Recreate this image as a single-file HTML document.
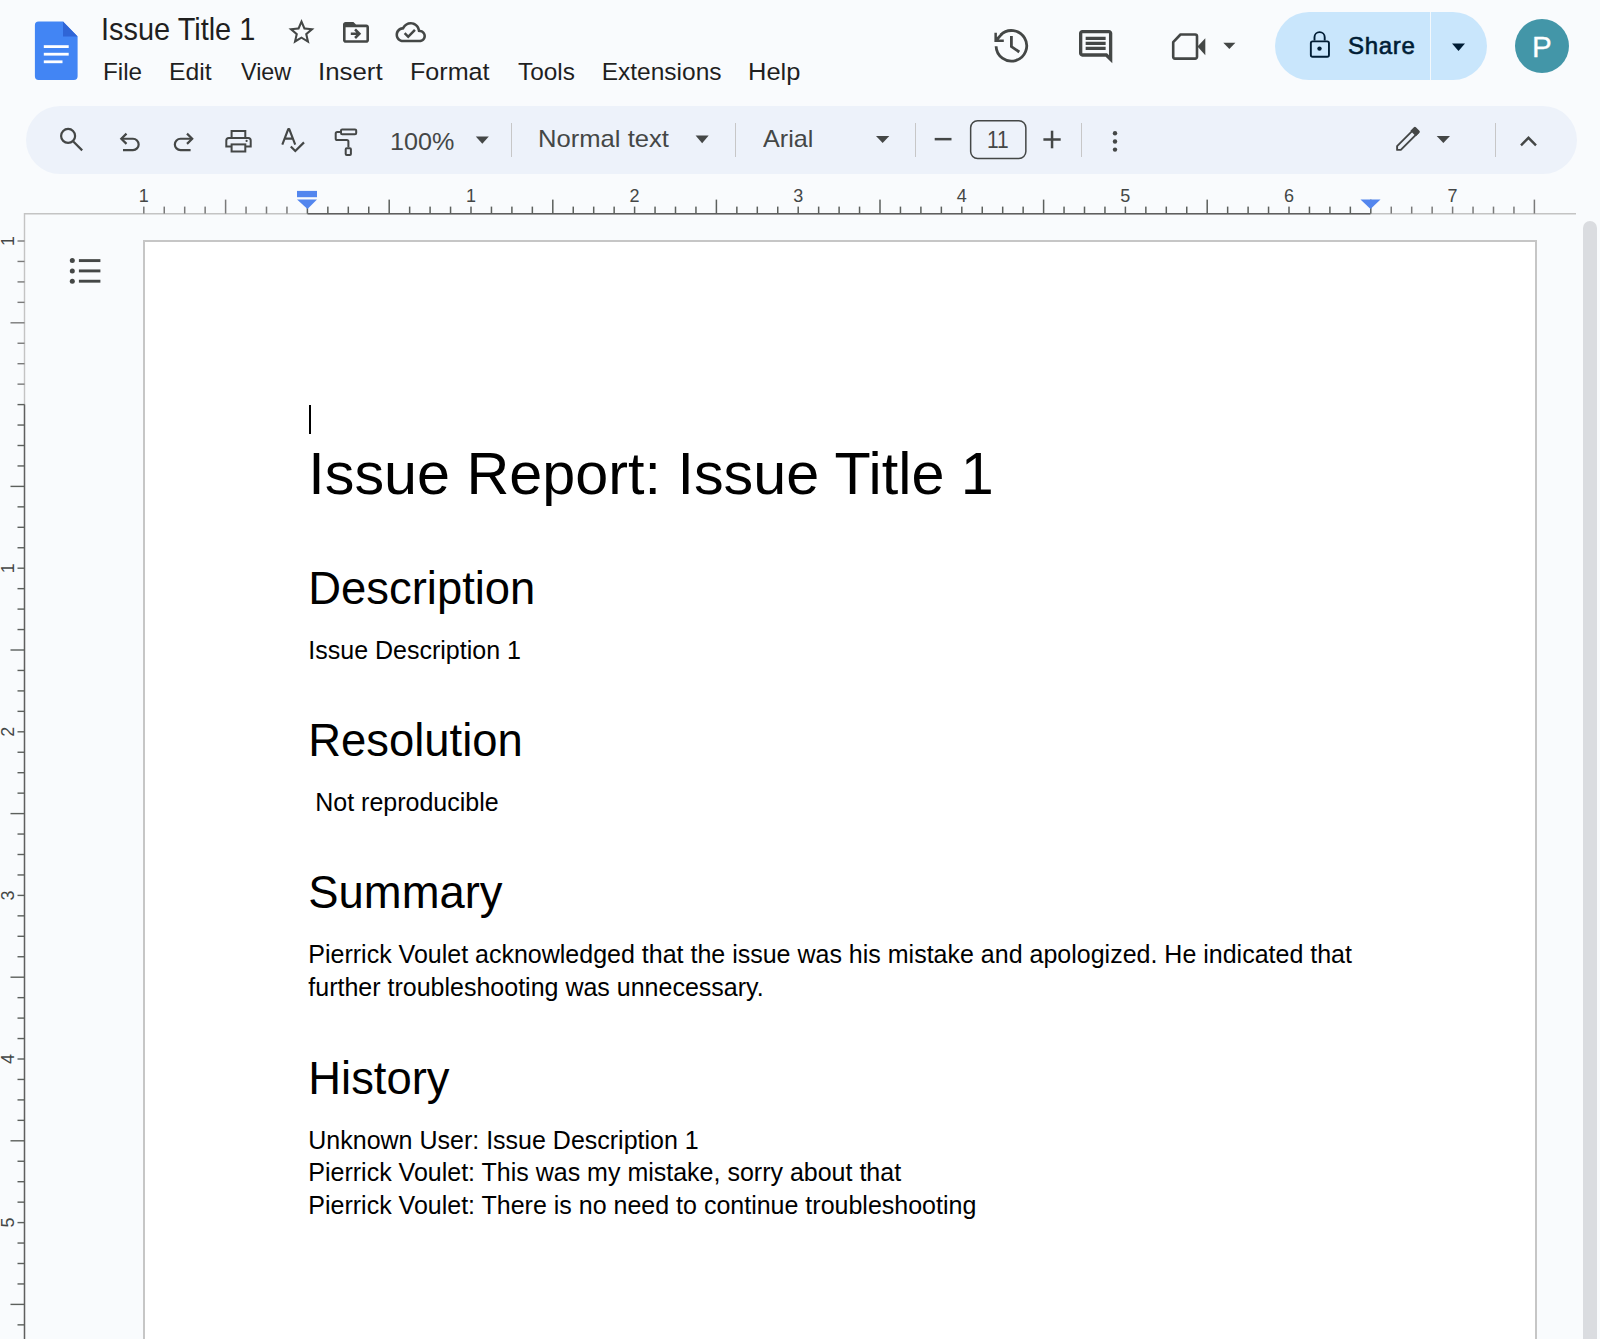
<!DOCTYPE html>
<html><head><meta charset="utf-8">
<style>
*{margin:0;padding:0;box-sizing:border-box}
html,body{width:1600px;height:1339px;overflow:hidden;background:#f9fbfd;font-family:"Liberation Sans",sans-serif;color:#1f1f1f}
.a{position:absolute}
.t{position:absolute;white-space:pre;line-height:1}
svg.l{position:absolute;left:0;top:0;overflow:visible}
.menu{font-size:24.5px;color:#1f1f1f}
.tt{font-size:23.8px;color:#444746}
.sep{position:absolute;width:1.4px;background:#c7c7c7;top:123px;height:34px}
.doc{color:#000}
</style></head>
<body>
<!-- toolbar bg -->
<div class="a" style="left:25.6px;top:105.6px;width:1551px;height:68px;border-radius:34px;background:#edf2fa"></div>
<!-- share button -->
<div class="a" style="left:1275px;top:12px;width:212.4px;height:67.6px;border-radius:34px;background:#c9e6fc"></div>
<div class="a" style="left:1429.5px;top:12px;width:1.2px;height:67.6px;background:#f3f8fc"></div>
<!-- avatar -->
<div class="a" style="left:1515px;top:18.7px;width:54.2px;height:54.2px;border-radius:50%;background:#4396a8"></div>
<div class="t" style="left:1532px;top:32px;font-size:29.6px;color:#fff;-webkit-text-stroke:0.3px #fff">P</div>

<!-- page -->
<div class="a" style="left:143px;top:240.1px;width:1394px;height:1200px;background:#fff;border:2px solid #c6c6c6"></div>
<!-- scrollbar -->
<div class="a" style="left:1583px;top:221px;width:14px;height:1200px;border-radius:7px;background:#dadce0"></div>

<svg class="l" width="1600" height="1339" viewBox="0 0 1600 1339">
  <!-- docs logo -->
  <path d="M38.6 21.6H63L77.6 36.6V76.2a3.7 3.7 0 0 1-3.7 3.7H38.6a3.7 3.7 0 0 1-3.7-3.7V25.3a3.7 3.7 0 0 1 3.7-3.7z" fill="#4285f4"/>
  <path d="M63 21.6L77.6 36.6H63z" fill="#2f65d6"/>
  <rect x="43.8" y="45.2" width="24.9" height="2.8" fill="#fff"/>
  <rect x="43.8" y="52.8" width="24.9" height="2.8" fill="#fff"/>
  <rect x="43.8" y="60.4" width="18.7" height="2.8" fill="#fff"/>
  <!-- star -->
  <path transform="translate(285.9 16.4) scale(1.3)" fill="#444746" d="M22 9.24l-7.19-.62L12 2 9.19 8.63 2 9.24l5.46 4.73L5.82 21 12 17.27 18.18 21l-1.63-7.03L22 9.24zM12 15.4l-3.76 2.27 1-4.28-3.32-2.88 4.38-.38L12 6.1l1.71 4.04 4.38.38-3.32 2.88 1 4.28L12 15.4z"/>
  <!-- folder move -->
  <path transform="translate(340.4 16.8) scale(1.3)" fill="#444746" d="M20,6h-8l-2-2H4C2.9,4,2,4.9,2,6v12c0,1.1,0.9,2,2,2h16c1.1,0,2-0.9,2-2V8C22,6.9,21.1,6,20,6z M20,18H4V8h16V18z M12.16,12H8v2h4.16l-1.59,1.59L11.99,17L16,13.01L11.99,9l-1.41,1.41L12.16,12z"/>
  <!-- cloud done -->
  <path transform="translate(395.5 16.9) scale(1.27)" fill="#444746" d="M19.35 10.04C18.67 6.59 15.64 4 12 4 9.11 4 6.6 5.64 5.35 8.04 2.34 8.36 0 10.910 0 14c0 3.31 2.69 6 6 6h13c2.76 0 5-2.24 5-5 0-2.64-2.05-4.78-4.65-4.960zM19 18H6c-2.21 0-4-1.79-4-4 0-2.05 1.53-3.76 3.56-3.97l1.07-.11.5-.95C8.08 7.14 9.940 6 12 6c2.62 0 4.88 1.86 5.39 4.43l.3 1.5 1.53.11c1.56.1 2.78 1.41 2.78 2.96 0 1.65-1.35 3-3 3zm-9-3.82l-2.09-2.09L6.5 13.5 10 17l6.01-6.01-1.41-1.41z"/>
  <!-- history -->
  <g fill="none" stroke="#444746" stroke-width="2.8">
    <path d="M996.1 46.3A15.3 15.3 0 1 0 1000.6 35"/>
    <path d="M1011.4 36.1V46.6L1019.3 52"/>
  </g>
  <path d="M994.4 32.7H996.9V37.2L1000.6 33.6L1002.5 35.3L998.8 39.4H1003.8V41.9H994.4z" fill="#444746"/>
  <!-- comment -->
  <path transform="translate(1075.67 26.67) scale(1.665)" fill="#444746" d="M21.99 4c0-1.1-.89-2-1.99-2H4c-1.1 0-2 .9-2 2v12c0 1.1.9 2 2 2h14l4 4-.01-18zM20 4v13.17L18.83 16H4V4h16zM6 12h12v2H6zm0-3h12v2H6zm0-3h12v2H6z"/>
  <!-- video -->
  <path d="M1180.5 34.5H1195.2a1.8 1.8 0 0 1 1.8 1.8V56.8a1.8 1.8 0 0 1-1.8 1.8H1175a1.8 1.8 0 0 1-1.8-1.8V42.2z" fill="none" stroke="#444746" stroke-width="2.6" stroke-linejoin="round"/>
  <path d="M1197.5 46.5L1205.3 38.3V55.2z" fill="#444746"/>
  <path d="M1223.3 42.8H1235.4L1229.35 49z" fill="#444746"/>
  <!-- lock -->
  <path d="M1314.5 40.5V37.2a5.1 5.1 0 0 1 10.2 0V40.5" fill="none" stroke="#001d35" stroke-width="1.9"/>
  <rect x="1310.85" y="41.35" width="18.1" height="15.4" rx="1.8" fill="none" stroke="#001d35" stroke-width="1.9"/>
  <circle cx="1319.5" cy="48.6" r="2.2" fill="#001d35"/>
  <!-- share dropdown -->
  <path d="M1452 43.6H1465L1458.5 51z" fill="#001d35"/>

  <!-- toolbar icons -->
  <g fill="none" stroke="#444746" stroke-width="2.2">
    <circle cx="68.1" cy="135.9" r="7"/>
    <path d="M73.3 141.5L82.2 150.4"/>
    <!-- undo -->
    <path d="M121.5 138.75H133a5.6 5.6 0 0 1 0 11.3H123"/>
    <path d="M126.5 133.6L121.3 138.75L126.5 143.9"/>
    <!-- redo -->
    <path d="M192 138.75H180.5a5.6 5.6 0 0 0 0 11.3H190.6"/>
    <path d="M187 133.6L192.2 138.75L187 143.9"/>
    <!-- spellcheck -->
    <path d="M282.3 144.6L288.3 129H289.2L295.2 144.6M285.2 138.6H292.3" stroke-width="2.1" stroke-linejoin="bevel"/>
    <path d="M290.8 146.5L295.3 151L304 142.4"/>
    <!-- paint -->
    <rect x="341" y="129.4" width="15.2" height="4.9" rx="1.2" stroke-width="2"/>
    <path d="M341 131.9H337.3a1.6 1.6 0 0 0-1.6 1.6V138.4a1.6 1.6 0 0 0 1.6 1.6H346.8a1.6 1.6 0 0 1 1.6 1.6V147.2" stroke-width="2"/>
    <rect x="345.7" y="148.2" width="5.2" height="6.7" rx="1" stroke-width="2"/>
    <!-- print -->
    <path d="M231.6 137V131H245.3V137" stroke-width="2"/>
    <path d="M231 146.5H226.3V140.4a2.5 2.5 0 0 1 2.5-2.5H248.2a2.5 2.5 0 0 1 2.5 2.5V146.5H246" stroke-width="2"/>
    <rect x="231.6" y="144.4" width="13.7" height="7.1" stroke-width="2"/>
  </g>
  <circle cx="246.6" cy="140.9" r="1.1" fill="#444746"/>
  <!-- dropdown arrows -->
  <g fill="#444746">
    <path d="M475.8 136.5H488.8L482.3 143.7z"/>
    <path d="M695.6 135.6H708.7L702.15 143.2z"/>
    <path d="M876 135.9H889.3L882.65 143.1z"/>
    <path d="M1436.7 135.9H1450L1443.35 142.9z"/>
    <!-- minus plus -->
    <rect x="934.7" y="137.9" width="16.8" height="2.5"/>
    <rect x="1043.4" y="138.25" width="17.3" height="2.5"/>
    <rect x="1050.8" y="130.7" width="2.5" height="17.6"/>
    <!-- kebab -->
    <circle cx="1115" cy="133.3" r="2.2"/>
    <circle cx="1115" cy="141.5" r="2.2"/>
    <circle cx="1115" cy="149.6" r="2.2"/>
  </g>
  <rect x="970.65" y="120.75" width="55.2" height="37.8" rx="7" fill="none" stroke="#444746" stroke-width="1.5"/>
  <!-- pencil -->
  <path d="M1397.1 146.2L1414.6 128.7L1418.3 132.4L1400.8 149.9H1397.1z" fill="none" stroke="#444746" stroke-width="1.9" stroke-linejoin="round"/>
  <path d="M1413.9 127.3a1.4 1.4 0 0 1 2 0L1419.4 130.8a1.4 1.4 0 0 1 0 2L1415.9 136.3L1410.4 130.8z" fill="#444746"/>
  <!-- chevron up -->
  <path d="M1521 145.3L1528.5 137.8L1536 145.3" fill="none" stroke="#444746" stroke-width="2.4"/>

  <!-- outline icon -->
  <g fill="#444746">
    <circle cx="72.3" cy="260.6" r="2.5"/>
    <circle cx="72.3" cy="270.9" r="2.5"/>
    <circle cx="72.3" cy="281.2" r="2.5"/>
    <rect x="78.9" y="259.15" width="21.5" height="2.9"/>
    <rect x="78.9" y="269.45" width="21.5" height="2.9"/>
    <rect x="78.9" y="279.75" width="21.5" height="2.9"/>
  </g>

  <!-- rulers lines -->
  <rect x="24" y="213" width="1552" height="1.5" fill="#c4c4c4"/>
  <rect x="307.5" y="213" width="1063" height="1.5" fill="#5f5f5f"/>
  <rect x="23.8" y="213" width="1.4" height="1126" fill="#c4c4c4"/>
  <rect x="23.8" y="404.5" width="1.4" height="935" fill="#5f5f5f"/>
  <g fill="#606462">
  <rect x="143.05" y="206.60" width="1.5" height="7" fill="#7a7a7a"/>
<rect x="163.50" y="206.60" width="1.5" height="7" fill="#7a7a7a"/>
<rect x="183.95" y="206.60" width="1.5" height="7" fill="#7a7a7a"/>
<rect x="204.40" y="206.60" width="1.5" height="7" fill="#7a7a7a"/>
<rect x="224.85" y="199.60" width="1.5" height="14" fill="#7a7a7a"/>
<rect x="245.30" y="206.60" width="1.5" height="7" fill="#7a7a7a"/>
<rect x="265.75" y="206.60" width="1.5" height="7" fill="#7a7a7a"/>
<rect x="286.20" y="206.60" width="1.5" height="7" fill="#7a7a7a"/>
<rect x="306.65" y="206.60" width="1.5" height="7" fill="#5c605d"/>
<rect x="327.10" y="206.60" width="1.5" height="7" fill="#5c605d"/>
<rect x="347.55" y="206.60" width="1.5" height="7" fill="#5c605d"/>
<rect x="368.00" y="206.60" width="1.5" height="7" fill="#5c605d"/>
<rect x="388.45" y="199.60" width="1.5" height="14" fill="#5c605d"/>
<rect x="408.90" y="206.60" width="1.5" height="7" fill="#5c605d"/>
<rect x="429.35" y="206.60" width="1.5" height="7" fill="#5c605d"/>
<rect x="449.80" y="206.60" width="1.5" height="7" fill="#5c605d"/>
<rect x="470.25" y="206.60" width="1.5" height="7" fill="#5c605d"/>
<rect x="490.70" y="206.60" width="1.5" height="7" fill="#5c605d"/>
<rect x="511.15" y="206.60" width="1.5" height="7" fill="#5c605d"/>
<rect x="531.60" y="206.60" width="1.5" height="7" fill="#5c605d"/>
<rect x="552.05" y="199.60" width="1.5" height="14" fill="#5c605d"/>
<rect x="572.50" y="206.60" width="1.5" height="7" fill="#5c605d"/>
<rect x="592.95" y="206.60" width="1.5" height="7" fill="#5c605d"/>
<rect x="613.40" y="206.60" width="1.5" height="7" fill="#5c605d"/>
<rect x="633.85" y="206.60" width="1.5" height="7" fill="#5c605d"/>
<rect x="654.30" y="206.60" width="1.5" height="7" fill="#5c605d"/>
<rect x="674.75" y="206.60" width="1.5" height="7" fill="#5c605d"/>
<rect x="695.20" y="206.60" width="1.5" height="7" fill="#5c605d"/>
<rect x="715.65" y="199.60" width="1.5" height="14" fill="#5c605d"/>
<rect x="736.10" y="206.60" width="1.5" height="7" fill="#5c605d"/>
<rect x="756.55" y="206.60" width="1.5" height="7" fill="#5c605d"/>
<rect x="777.00" y="206.60" width="1.5" height="7" fill="#5c605d"/>
<rect x="797.45" y="206.60" width="1.5" height="7" fill="#5c605d"/>
<rect x="817.90" y="206.60" width="1.5" height="7" fill="#5c605d"/>
<rect x="838.35" y="206.60" width="1.5" height="7" fill="#5c605d"/>
<rect x="858.80" y="206.60" width="1.5" height="7" fill="#5c605d"/>
<rect x="879.25" y="199.60" width="1.5" height="14" fill="#5c605d"/>
<rect x="899.70" y="206.60" width="1.5" height="7" fill="#5c605d"/>
<rect x="920.15" y="206.60" width="1.5" height="7" fill="#5c605d"/>
<rect x="940.60" y="206.60" width="1.5" height="7" fill="#5c605d"/>
<rect x="961.05" y="206.60" width="1.5" height="7" fill="#5c605d"/>
<rect x="981.50" y="206.60" width="1.5" height="7" fill="#5c605d"/>
<rect x="1001.95" y="206.60" width="1.5" height="7" fill="#5c605d"/>
<rect x="1022.40" y="206.60" width="1.5" height="7" fill="#5c605d"/>
<rect x="1042.85" y="199.60" width="1.5" height="14" fill="#5c605d"/>
<rect x="1063.30" y="206.60" width="1.5" height="7" fill="#5c605d"/>
<rect x="1083.75" y="206.60" width="1.5" height="7" fill="#5c605d"/>
<rect x="1104.20" y="206.60" width="1.5" height="7" fill="#5c605d"/>
<rect x="1124.65" y="206.60" width="1.5" height="7" fill="#5c605d"/>
<rect x="1145.10" y="206.60" width="1.5" height="7" fill="#5c605d"/>
<rect x="1165.55" y="206.60" width="1.5" height="7" fill="#5c605d"/>
<rect x="1186.00" y="206.60" width="1.5" height="7" fill="#5c605d"/>
<rect x="1206.45" y="199.60" width="1.5" height="14" fill="#5c605d"/>
<rect x="1226.90" y="206.60" width="1.5" height="7" fill="#5c605d"/>
<rect x="1247.35" y="206.60" width="1.5" height="7" fill="#5c605d"/>
<rect x="1267.80" y="206.60" width="1.5" height="7" fill="#5c605d"/>
<rect x="1288.25" y="206.60" width="1.5" height="7" fill="#5c605d"/>
<rect x="1308.70" y="206.60" width="1.5" height="7" fill="#5c605d"/>
<rect x="1329.15" y="206.60" width="1.5" height="7" fill="#5c605d"/>
<rect x="1349.60" y="206.60" width="1.5" height="7" fill="#5c605d"/>
<rect x="1370.05" y="199.60" width="1.5" height="14" fill="#5c605d"/>
<rect x="1390.50" y="206.60" width="1.5" height="7" fill="#7a7a7a"/>
<rect x="1410.95" y="206.60" width="1.5" height="7" fill="#7a7a7a"/>
<rect x="1431.40" y="206.60" width="1.5" height="7" fill="#7a7a7a"/>
<rect x="1451.85" y="206.60" width="1.5" height="7" fill="#7a7a7a"/>
<rect x="1472.30" y="206.60" width="1.5" height="7" fill="#7a7a7a"/>
<rect x="1492.75" y="206.60" width="1.5" height="7" fill="#7a7a7a"/>
<rect x="1513.20" y="206.60" width="1.5" height="7" fill="#7a7a7a"/>
<rect x="1533.65" y="199.60" width="1.5" height="14" fill="#7a7a7a"/>
  </g>
  <g fill="#606462">
  <rect x="17.50" y="240.30" width="7" height="1.4" fill="#7a7a7a"/>
<rect x="17.50" y="260.75" width="7" height="1.4" fill="#7a7a7a"/>
<rect x="17.50" y="281.20" width="7" height="1.4" fill="#7a7a7a"/>
<rect x="17.50" y="301.65" width="7" height="1.4" fill="#7a7a7a"/>
<rect x="10.50" y="322.10" width="14" height="1.4" fill="#7a7a7a"/>
<rect x="17.50" y="342.55" width="7" height="1.4" fill="#7a7a7a"/>
<rect x="17.50" y="363.00" width="7" height="1.4" fill="#7a7a7a"/>
<rect x="17.50" y="383.45" width="7" height="1.4" fill="#7a7a7a"/>
<rect x="17.50" y="403.90" width="7" height="1.4" fill="#5c605d"/>
<rect x="17.50" y="424.35" width="7" height="1.4" fill="#5c605d"/>
<rect x="17.50" y="444.80" width="7" height="1.4" fill="#5c605d"/>
<rect x="17.50" y="465.25" width="7" height="1.4" fill="#5c605d"/>
<rect x="10.50" y="485.70" width="14" height="1.4" fill="#5c605d"/>
<rect x="17.50" y="506.15" width="7" height="1.4" fill="#5c605d"/>
<rect x="17.50" y="526.60" width="7" height="1.4" fill="#5c605d"/>
<rect x="17.50" y="547.05" width="7" height="1.4" fill="#5c605d"/>
<rect x="17.50" y="567.50" width="7" height="1.4" fill="#5c605d"/>
<rect x="17.50" y="587.95" width="7" height="1.4" fill="#5c605d"/>
<rect x="17.50" y="608.40" width="7" height="1.4" fill="#5c605d"/>
<rect x="17.50" y="628.85" width="7" height="1.4" fill="#5c605d"/>
<rect x="10.50" y="649.30" width="14" height="1.4" fill="#5c605d"/>
<rect x="17.50" y="669.75" width="7" height="1.4" fill="#5c605d"/>
<rect x="17.50" y="690.20" width="7" height="1.4" fill="#5c605d"/>
<rect x="17.50" y="710.65" width="7" height="1.4" fill="#5c605d"/>
<rect x="17.50" y="731.10" width="7" height="1.4" fill="#5c605d"/>
<rect x="17.50" y="751.55" width="7" height="1.4" fill="#5c605d"/>
<rect x="17.50" y="772.00" width="7" height="1.4" fill="#5c605d"/>
<rect x="17.50" y="792.45" width="7" height="1.4" fill="#5c605d"/>
<rect x="10.50" y="812.90" width="14" height="1.4" fill="#5c605d"/>
<rect x="17.50" y="833.35" width="7" height="1.4" fill="#5c605d"/>
<rect x="17.50" y="853.80" width="7" height="1.4" fill="#5c605d"/>
<rect x="17.50" y="874.25" width="7" height="1.4" fill="#5c605d"/>
<rect x="17.50" y="894.70" width="7" height="1.4" fill="#5c605d"/>
<rect x="17.50" y="915.15" width="7" height="1.4" fill="#5c605d"/>
<rect x="17.50" y="935.60" width="7" height="1.4" fill="#5c605d"/>
<rect x="17.50" y="956.05" width="7" height="1.4" fill="#5c605d"/>
<rect x="10.50" y="976.50" width="14" height="1.4" fill="#5c605d"/>
<rect x="17.50" y="996.95" width="7" height="1.4" fill="#5c605d"/>
<rect x="17.50" y="1017.40" width="7" height="1.4" fill="#5c605d"/>
<rect x="17.50" y="1037.85" width="7" height="1.4" fill="#5c605d"/>
<rect x="17.50" y="1058.30" width="7" height="1.4" fill="#5c605d"/>
<rect x="17.50" y="1078.75" width="7" height="1.4" fill="#5c605d"/>
<rect x="17.50" y="1099.20" width="7" height="1.4" fill="#5c605d"/>
<rect x="17.50" y="1119.65" width="7" height="1.4" fill="#5c605d"/>
<rect x="10.50" y="1140.10" width="14" height="1.4" fill="#5c605d"/>
<rect x="17.50" y="1160.55" width="7" height="1.4" fill="#5c605d"/>
<rect x="17.50" y="1181.00" width="7" height="1.4" fill="#5c605d"/>
<rect x="17.50" y="1201.45" width="7" height="1.4" fill="#5c605d"/>
<rect x="17.50" y="1221.90" width="7" height="1.4" fill="#5c605d"/>
<rect x="17.50" y="1242.35" width="7" height="1.4" fill="#5c605d"/>
<rect x="17.50" y="1262.80" width="7" height="1.4" fill="#5c605d"/>
<rect x="17.50" y="1283.25" width="7" height="1.4" fill="#5c605d"/>
<rect x="10.50" y="1303.70" width="14" height="1.4" fill="#5c605d"/>
<rect x="17.50" y="1324.15" width="7" height="1.4" fill="#5c605d"/>
  </g>
  <g font-family="Liberation Sans" font-size="18" fill="#444746" text-anchor="middle">
  <text x="143.75" y="201.7">1</text>
<text x="470.95" y="201.7">1</text>
<text x="634.55" y="201.7">2</text>
<text x="798.15" y="201.7">3</text>
<text x="961.75" y="201.7">4</text>
<text x="1125.35" y="201.7">5</text>
<text x="1288.95" y="201.7">6</text>
<text x="1452.55" y="201.7">7</text>
  <text transform="translate(13.6 241.00) rotate(-90)" x="0" y="0">1</text>
<text transform="translate(13.6 568.20) rotate(-90)" x="0" y="0">1</text>
<text transform="translate(13.6 731.80) rotate(-90)" x="0" y="0">2</text>
<text transform="translate(13.6 895.40) rotate(-90)" x="0" y="0">3</text>
<text transform="translate(13.6 1059.00) rotate(-90)" x="0" y="0">4</text>
<text transform="translate(13.6 1222.60) rotate(-90)" x="0" y="0">5</text>
  </g>
  <!-- margin markers -->
  <g fill="#5386ee">
    <rect x="297" y="190.9" width="20" height="6.3"/>
    <path d="M297 199.4H317L307.5 209z"/>
    <path d="M1360.5 199.4H1380.5L1370.5 209z"/>
  </g>
</svg>

<!-- header text -->
<div class="t" style="left:101px;top:13.94px;font-size:31.5px;color:#1f1f1f;transform:scaleX(0.918);transform-origin:0 0">Issue Title 1</div>
<div class="t menu" style="left:103.26px;top:60.16px;transform:scaleX(0.991);transform-origin:0 0">File</div>
<div class="t menu" style="left:169.42px;top:60.16px;transform:scaleX(1.010);transform-origin:0 0">Edit</div>
<div class="t menu" style="left:240.9px;top:60.16px;transform:scaleX(0.952);transform-origin:0 0">View</div>
<div class="t menu" style="left:317.83px;top:60.16px;transform:scaleX(1.055);transform-origin:0 0">Insert</div>
<div class="t menu" style="left:409.9px;top:60.16px;transform:scaleX(1.025);transform-origin:0 0">Format</div>
<div class="t menu" style="left:518px;top:60.16px;transform:scaleX(0.996);transform-origin:0 0">Tools</div>
<div class="t menu" style="left:601.7px;top:60.16px;transform:scaleX(1.0);transform-origin:0 0">Extensions</div>
<div class="t menu" style="left:747.86px;top:60.16px;transform:scaleX(1.039);transform-origin:0 0">Help</div>
<div class="t" style="left:1348px;top:33.7px;font-size:24px;color:#001d35;-webkit-text-stroke:0.6px #001d35;letter-spacing:0.7px">Share</div>

<!-- separators -->
<div class="sep" style="left:511.1px"></div>
<div class="sep" style="left:734.5px"></div>
<div class="sep" style="left:914.8px"></div>
<div class="sep" style="left:1080.7px"></div>
<div class="sep" style="left:1494.5px"></div>
<!-- toolbar text -->
<div class="t tt" style="left:389.7px;top:130.1px;transform:scaleX(1.057);transform-origin:0 0">100%</div>
<div class="t tt" style="left:538px;top:127.2px;transform:scaleX(1.076);transform-origin:0 0">Normal text</div>
<div class="t tt" style="left:763.2px;top:126.9px;transform:scaleX(1.057);transform-origin:0 0">Arial</div>
<div class="t tt" style="left:987.3px;top:127.5px;transform:scaleX(0.88);transform-origin:0 0">11</div>

<!-- doc -->
<div class="a" style="left:309px;top:405px;width:2px;height:29px;background:#000"></div>
<div class="t doc" style="left:308.3px;top:443.6px;font-size:59.3px">Issue Report: Issue Title 1</div>
<div class="t doc" style="left:308.3px;top:566.3px;font-size:45.4px">Description</div>
<div class="t doc" style="left:308.3px;top:638px;font-size:25px">Issue Description 1</div>
<div class="t doc" style="left:308.3px;top:717.9px;font-size:45.4px">Resolution</div>
<div class="t doc" style="left:308.3px;top:789.8px;font-size:25px"> Not reproducible</div>
<div class="t doc" style="left:308.3px;top:870.3px;font-size:45.4px">Summary</div>
<div class="t doc" style="left:308.3px;top:942px;font-size:25px">Pierrick Voulet acknowledged that the issue was his mistake and apologized. He indicated that</div>
<div class="t doc" style="left:308.3px;top:974.5px;font-size:25px">further troubleshooting was unnecessary.</div>
<div class="t doc" style="left:308.3px;top:1056.2px;font-size:45.4px">History</div>
<div class="t doc" style="left:308.3px;top:1127.5px;font-size:25px">Unknown User: Issue Description 1</div>
<div class="t doc" style="left:308.3px;top:1160px;font-size:25px">Pierrick Voulet: This was my mistake, sorry about that</div>
<div class="t doc" style="left:308.3px;top:1193.4px;font-size:25px">Pierrick Voulet: There is no need to continue troubleshooting</div>
</body></html>
